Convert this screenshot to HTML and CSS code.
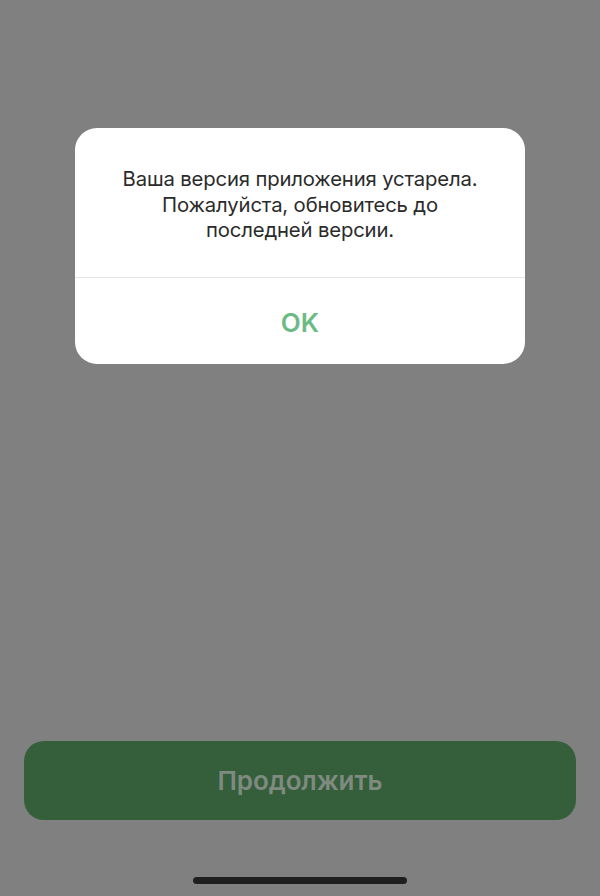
FILE: index.html
```html
<!DOCTYPE html>
<html lang="ru">
<head>
<meta charset="utf-8">
<link rel="stylesheet" href="styles.css">
</head>
<body>
<div class="screen">
  <div class="alert">
    <div class="alert-msg">Ваша версия приложения устарела.<br>Пожалуйста, обновитесь до<br>последней версии.</div>
    <div class="alert-btn">OK</div>
  </div>
  <div class="spacer"></div>
  <div class="continue">Продолжить</div>
  <div class="home-wrap"><div class="home"></div></div>
</div>
</body>
</html>
```

FILE: styles.css
```css
html, body { margin: 0; padding: 0; }
body { background: #808080; font-family: Inter, "Liberation Sans", sans-serif; }
.screen { width: 600px; height: 896px; display: flex; flex-direction: column; align-items: center; box-sizing: border-box; padding-top: 128px; }
.alert { width: 450px; background: #fff; border-radius: 22px; display: flex; flex-direction: column; }
.alert-msg { height: 150px; border-bottom: 1px solid #e6e6e6; box-sizing: border-box; padding-top: 38px; text-align: center; color: #2b2b2b; font-size: 20.3px; line-height: 25.5px; letter-spacing: -0.15px; }
.alert-btn { height: 86px; display: flex; align-items: center; justify-content: center; color: #6cbb85; font-size: 26px; font-weight: 600; padding-top: 2px; box-sizing: border-box; }
.spacer { flex: 1; }
.continue { width: 552px; height: 79px; border-radius: 20px; background: #355e3b; color: #7f8a80; display: flex; align-items: center; justify-content: center; font-size: 26px; font-weight: 600; letter-spacing: -0.1px; }
.home-wrap { height: 76px; width: 100%; display: flex; justify-content: center; align-items: flex-start; padding-top: 57px; box-sizing: border-box; }
.home { width: 214px; height: 7px; border-radius: 4px; background: #1f1f1f; }
```
